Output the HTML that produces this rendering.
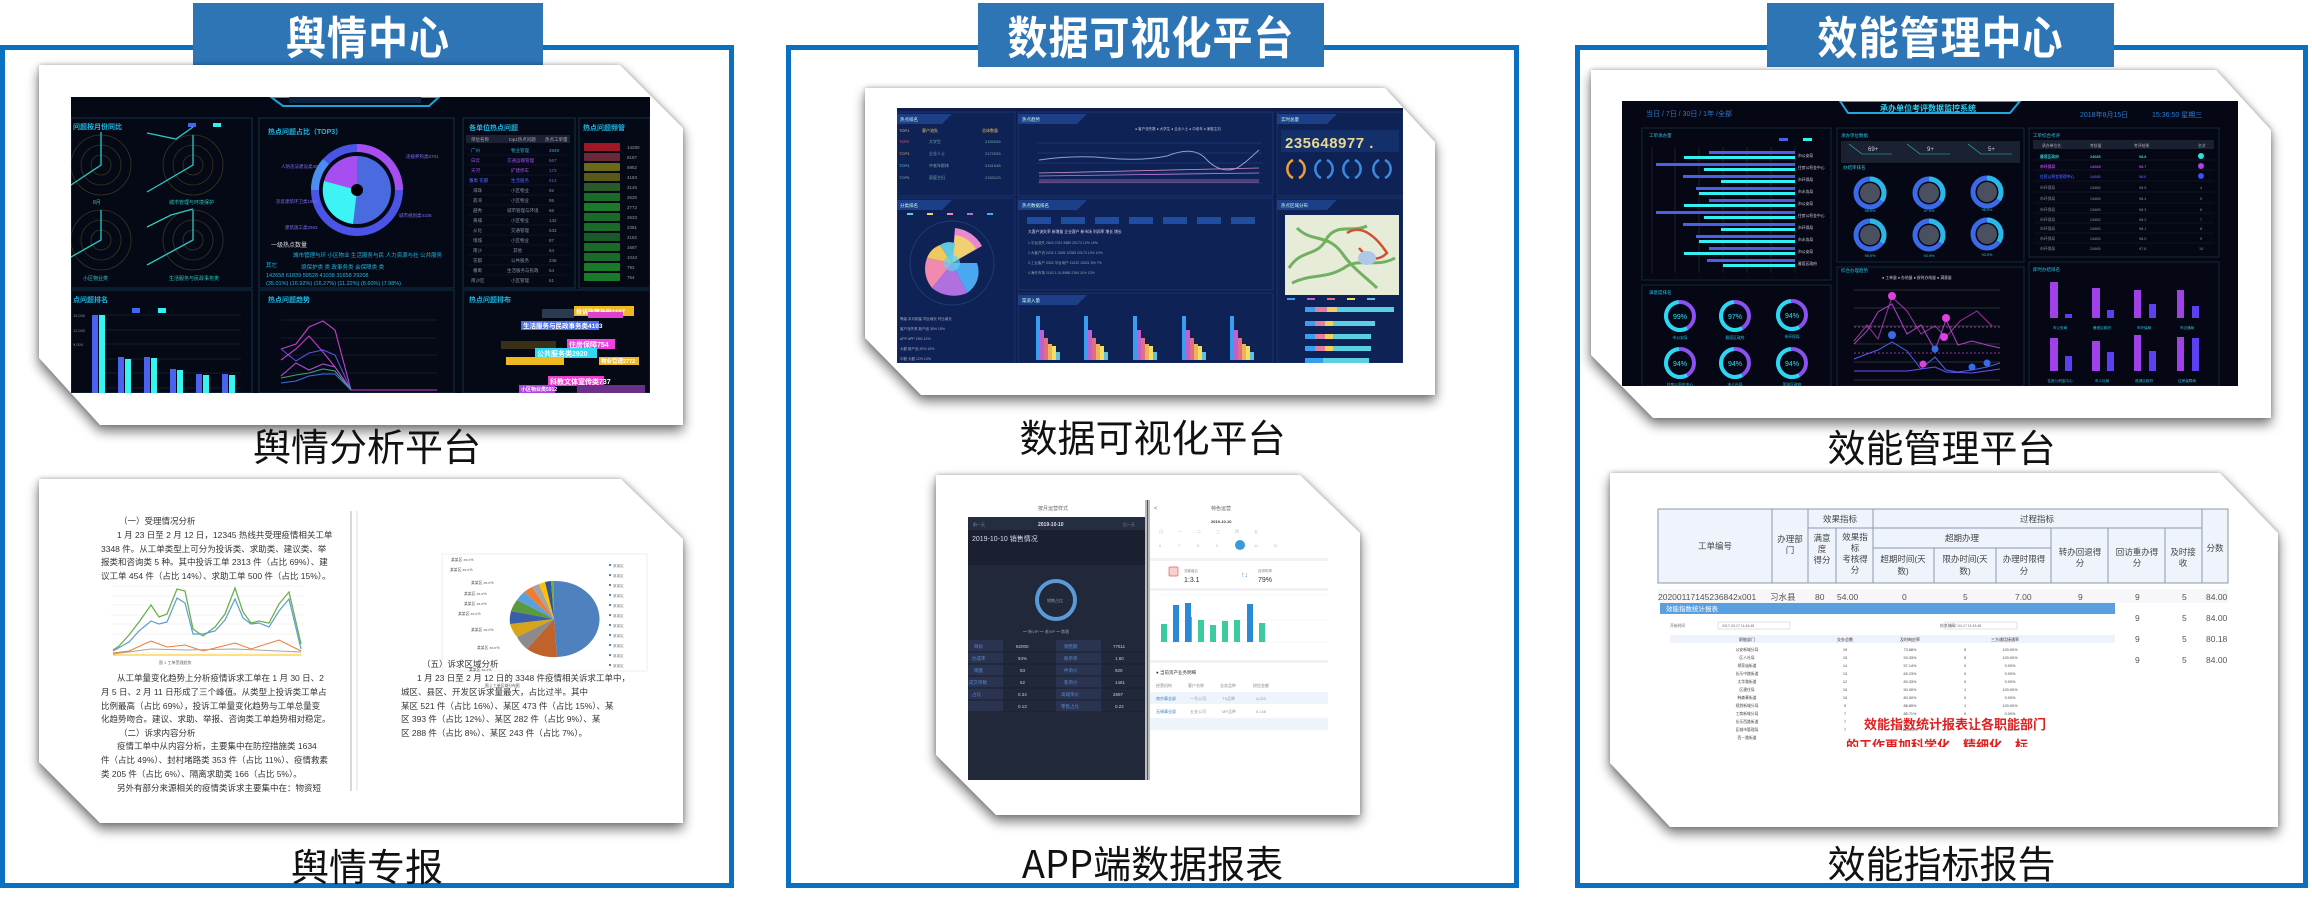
<!DOCTYPE html>
<html><head><meta charset="utf-8">
<style>
*{margin:0;padding:0;box-sizing:border-box}
body{width:2312px;height:911px;background:#fff;position:relative;overflow:hidden;font-family:"Liberation Sans","Noto Sans CJK SC",sans-serif}
.abs{position:absolute}
.panel{position:absolute;border:5px solid #0a70c2;top:45px;height:843px}
.title{position:absolute;top:3px;height:64px;background:#2e75b6;color:#fff;font-weight:bold;font-size:40px;display:flex;align-items:center;justify-content:center;letter-spacing:1px;font-family:"Noto Sans CJK SC",sans-serif}
.title span{display:inline-block;transform:scaleY(1.12)}
.cap{position:absolute;font-size:38px;color:#111;text-align:center;font-family:"Noto Sans CJK SC",sans-serif;line-height:1}
.cardw{position:absolute;filter:drop-shadow(0 6px 6px rgba(0,0,0,.45)) drop-shadow(0 0 2px rgba(0,0,0,.3))}
.card{position:absolute;inset:0;background:#fff;overflow:hidden}
svg text{font-family:"Liberation Sans","Noto Sans CJK SC",sans-serif}
</style></head><body>

<!-- PANELS -->
<div class="panel" style="left:0;width:734px"></div>
<div class="panel" style="left:786px;width:733px"></div>
<div class="panel" style="left:1575px;width:733px"></div>

<div class="title" style="left:193px;width:350px"><span>舆情中心</span></div>
<div class="title" style="left:978px;width:346px"><span>数据可视化平台</span></div>
<div class="title" style="left:1767px;width:347px"><span>效能管理中心</span></div>

<!-- ============ PANEL 1 CARD 1 ============ -->
<div class="cardw" style="left:39px;top:65px;width:644px;height:360px">
 <div class="card" style="clip-path:polygon(0 0,581px 0,644px 63px,644px 100%,61px 100%,0 293px)">
  <svg class="abs" style="left:32px;top:32px" width="579" height="296" viewBox="0 0 579 296">
   <rect width="579" height="296" fill="#050916"/>
   <path d="M200 0 L368 0 L358 9 L212 9 Z" fill="none" stroke="#1aa7d8" stroke-width="2"/>
   <rect x="218" y="0" width="132" height="6" fill="#0c2440"/>
   <!-- panel frames -->
   <g fill="none" stroke="#13314a" stroke-width="1">
    <rect x="0" y="21" width="181" height="170"/><rect x="188" y="21" width="195" height="170"/>
    <rect x="392" y="21" width="112" height="170"/><rect x="508" y="21" width="71" height="170"/>
    <rect x="0" y="193" width="181" height="103"/><rect x="188" y="193" width="195" height="103"/><rect x="392" y="193" width="187" height="103"/>
   </g>
   <text x="2" y="32" font-size="7" fill="#1fb7e0" font-weight="bold">问题按月份同比</text>
   <rect x="117" y="26" width="8" height="4" fill="#4466ee"/><rect x="142" y="26" width="8" height="4" fill="#33f0f0"/>
   <text x="197" y="37" font-size="7" fill="#1fb7e0" font-weight="bold">热点问题占比（TOP3）</text>
   <text x="398" y="33" font-size="7" fill="#1fb7e0" font-weight="bold">各单位热点问题</text>
   <text x="512" y="33" font-size="7" fill="#1fb7e0" font-weight="bold">热点问题频管</text>
   <text x="2" y="205" font-size="7" fill="#1fb7e0" font-weight="bold">点问题排名</text>
   <text x="197" y="205" font-size="7" fill="#1fb7e0" font-weight="bold">热点问题趋势</text>
   <text x="398" y="205" font-size="7" fill="#1fb7e0" font-weight="bold">热点问题排布</text>
   <!-- radars -->
   <g fill="none" stroke="#3b3520" stroke-width="0.8">
    <circle cx="30" cy="68" r="10"/><circle cx="30" cy="68" r="20"/><circle cx="30" cy="68" r="30"/>
    <circle cx="122" cy="68" r="10"/><circle cx="122" cy="68" r="20"/><circle cx="122" cy="68" r="30"/>
    <circle cx="30" cy="143" r="10"/><circle cx="30" cy="143" r="20"/><circle cx="30" cy="143" r="30"/>
    <circle cx="122" cy="143" r="10"/><circle cx="122" cy="143" r="20"/><circle cx="122" cy="143" r="30"/>
   </g>
   <g stroke="#2fc8c0" stroke-width="1.3" fill="none">
    <path d="M30 35 V68 L0 88"/><path d="M122 38 V68 L76 95 M76 36 L105 42 L122 30"/>
    <path d="M30 113 V143 L0 160"/><path d="M122 113 V143 L76 168 M76 130 L100 118 L122 112"/>
   </g>
   <g font-size="5" fill="#2fc8c0"><text x="22" y="107">8月</text><text x="98" y="107">城市管理与环境保护</text><text x="12" y="183">小区物业类</text><text x="98" y="183">生活服务与民政事务类</text></g>
   <!-- donut -->
   <circle cx="286" cy="93" r="46" fill="#4a55e8"/>
   <path d="M286 47 A46 46 0 0 1 332 93 L286 93Z" fill="#a64ef0"/>
   <path d="M286 93 L240 93 A46 46 0 0 1 252 62Z" fill="#4a8ef0"/>
   <circle cx="286" cy="93" r="38" fill="#050916"/>
   <circle cx="286" cy="93" r="34" fill="#4a6ae0"/>
   <path d="M286 93 L286 59 A34 34 0 0 0 253 84 Z" fill="#a64ef0"/>
   <path d="M286 93 L253 84 A34 34 0 0 0 282 127 Z" fill="#3ef3f3"/>
   <circle cx="286" cy="93" r="6" fill="#000"/>
   <g font-size="4.5" fill="#7a6ef0"><text x="210" y="71">人防违法建设类4052</text><text x="205" y="106">违反建筑环卫类1904</text><text x="335" y="61">违规养狗类5701</text><text x="328" y="120">城市规划类4105</text><text x="214" y="132">建筑施工类2563</text></g>
   <text x="200" y="150" font-size="6" fill="#ddd">一级热点数量</text>
   <g font-size="5.5" fill="#1fb7e0"><text x="222" y="160">城市管理与环 小区物业 生活服务与民 人力资源与社 公共服务</text>
    <text x="195" y="170">其它</text><text x="230" y="172">境保护类    类     政事务类    会保障类    类</text>
    <text x="195" y="180">142658  61839  59528  41038  31658  29208</text>
    <text x="195" y="188">(35.01%) (16.92%) (16.27%) (11.22%) (8.60%) (7.98%)</text></g>
   <!-- table -->
   <rect x="395" y="38" width="104" height="8" fill="#1c2233"/>
   <g font-size="4.5" fill="#aaa"><text x="400" y="44">单位名称</text><text x="438" y="44">top1热点问题</text><text x="474" y="44">热点工单量</text></g>
   <g font-size="4.5">
    <text x="400" y="55" fill="#3ac">广州</text><text x="440" y="55" fill="#3ac">物业管理</text><text x="478" y="55" fill="#3ac">2849</text>
    <text x="400" y="65" fill="#a44ef0">白云</text><text x="436" y="65" fill="#a44ef0">交通运输管理</text><text x="478" y="65" fill="#a44ef0">667</text>
    <text x="400" y="75" fill="#a44ef0">天河</text><text x="440" y="75" fill="#a44ef0">扩建停车</text><text x="478" y="75" fill="#a44ef0">173</text>
    <text x="398" y="85" fill="#5566ff">番禺 花都</text><text x="440" y="85" fill="#5566ff">生活服务</text><text x="478" y="85" fill="#5566ff">614</text>
   </g>
   <g fill="#8891a0" font-size="4.5">
    <text x="402" y="95">海珠</text><text x="440" y="95">小区物业</text><text x="478" y="95">92</text>
    <text x="402" y="105">荔湾</text><text x="440" y="105">小区物业</text><text x="478" y="105">95</text>
    <text x="402" y="115">越秀</text><text x="436" y="115">城市管理与环境</text><text x="478" y="115">66</text>
    <text x="402" y="125">黄埔</text><text x="440" y="125">小区物业</text><text x="478" y="125">142</text>
    <text x="402" y="135">从化</text><text x="440" y="135">交通管理</text><text x="478" y="135">533</text>
    <text x="402" y="145">增城</text><text x="440" y="145">小区物业</text><text x="478" y="145">87</text>
    <text x="402" y="155">南沙</text><text x="442" y="155">其他</text><text x="478" y="155">54</text>
    <text x="402" y="165">花都</text><text x="440" y="165">公共服务</text><text x="478" y="165">245</text>
    <text x="402" y="175">番禺</text><text x="436" y="175">生活服务与民政</text><text x="478" y="175">54</text>
    <text x="400" y="185">南沙区</text><text x="440" y="185">小区管理</text><text x="478" y="185">61</text>
   </g>
   <g stroke="#1a2030" stroke-width="0.6"><path d="M397 58H500M397 68H500M397 78H500M397 88H500M397 98H500M397 108H500M397 118H500M397 128H500M397 138H500M397 148H500M397 158H500M397 168H500M397 178H500"/></g>
   <!-- right tags -->
   <g>
    <rect x="513" y="46" width="36" height="8" rx="1" fill="#a01828"/>
    <rect x="513" y="56" width="36" height="8" rx="1" fill="#6a2838"/>
    <rect x="513" y="66" width="36" height="8" rx="1" fill="#6a6a18"/>
    <rect x="513" y="76" width="36" height="8" rx="1" fill="#5a5a18"/>
    <rect x="513" y="86" width="36" height="8" rx="1" fill="#2a5a2a"/>
    <rect x="513" y="96" width="36" height="8" rx="1" fill="#1a6a2a"/>
    <rect x="513" y="106" width="36" height="8" rx="1" fill="#1a7a2a"/>
    <rect x="513" y="116" width="36" height="8" rx="1" fill="#1a6a2a"/>
    <rect x="513" y="126" width="36" height="8" rx="1" fill="#1a6a2a"/>
    <rect x="513" y="136" width="36" height="8" rx="1" fill="#1a5a2a"/>
    <rect x="513" y="146" width="36" height="8" rx="1" fill="#1a6a2a"/>
    <rect x="513" y="156" width="36" height="8" rx="1" fill="#1a6a2a"/>
    <rect x="513" y="166" width="36" height="8" rx="1" fill="#1a7a2a"/>
    <rect x="513" y="176" width="36" height="8" rx="1" fill="#1a7a2a"/>
   </g>
   <g fill="#999" font-size="4.5"><text x="556" y="52">14280</text><text x="556" y="62">8187</text><text x="556" y="72">5952</text><text x="556" y="82">4183</text><text x="556" y="92">3145</text><text x="556" y="102">2520</text><text x="556" y="112">2772</text><text x="556" y="122">2633</text><text x="556" y="132">2381</text><text x="556" y="142">2182</text><text x="556" y="152">1687</text><text x="556" y="162">1043</text><text x="556" y="172">792</text><text x="556" y="182">754</text></g>
   <!-- bar chart -->
   <rect x="61" y="211" width="8" height="5" fill="#4466ee"/><rect x="87" y="211" width="8" height="5" fill="#33f0f0"/>
   <g stroke="#2a3040" stroke-width="0.6"><path d="M25 218H170M25 233H170M25 247H170M25 262H170M25 276H170M25 291H170"/></g>
   <g font-size="4" fill="#889"><text x="2" y="220">15,000</text><text x="2" y="235">12,000</text><text x="2" y="249">9,000</text></g>
   <g fill="#4a62ee"><rect x="21" y="218" width="6" height="78"/><rect x="47" y="260" width="6" height="36"/><rect x="73" y="260" width="6" height="36"/><rect x="99" y="272" width="6" height="24"/><rect x="125" y="277" width="6" height="19"/><rect x="151" y="277" width="6" height="19"/></g>
   <g fill="#35f5f0"><rect x="28" y="218" width="6" height="78"/><rect x="54" y="262" width="6" height="34"/><rect x="80" y="261" width="6" height="35"/><rect x="106" y="273" width="6" height="23"/><rect x="132" y="278" width="6" height="18"/><rect x="158" y="278" width="6" height="18"/></g>
   <!-- line chart -->
   <g stroke="#2a3040" stroke-width="0.6"><path d="M210 223H366M210 241H366M210 258H366M210 276H366M210 293H366"/></g>
   <g fill="none" stroke-width="1.1">
    <path d="M210 252 L225 247 L238 230 L252 224 L264 233 L280 293 L366 293" stroke="#c040c8"/>
    <path d="M210 252 L225 264 L238 256 L252 253 L264 258 L280 293" stroke="#5a50e0"/>
    <path d="M210 279 L225 266 L238 273 L252 267 L264 270 L280 293" stroke="#b050d0"/>
    <path d="M210 286 L225 284 L238 279 L252 277 L264 277 L280 293" stroke="#3a70e0"/>
    <path d="M210 281 L225 278 L238 276 L252 272 L264 274 L280 293" stroke="#40a080"/>
   </g>
   <path d="M210 223 L225 212 L238 199 L252 215 L264 230" fill="none" stroke="#c040c8" stroke-width="1.1" transform="translate(0,40)"/>
   <!-- word cloud -->
   <g font-size="7" font-weight="bold" fill="#fff">
    <rect x="471" y="212" width="32" height="9" fill="#2a3a50"/>
    <rect x="503" y="209" width="60" height="10" fill="#f0b820"/><text x="505" y="217" font-size="6">投诉政策补贴1107</text>
    <rect x="517" y="215" width="35" height="6" fill="#e040d0"/>
    <rect x="450" y="224" width="78" height="9" fill="#4a6ef0"/><text x="452" y="231" font-size="6.5">生活服务与民政事务类4103</text>
    <rect x="430" y="244" width="55" height="8" fill="#3a3018"/>
    <rect x="496" y="242" width="48" height="10" fill="#f040e0"/><text x="498" y="250">住房保障754</text>
    <rect x="464" y="251" width="62" height="10" fill="#30d8f0"/><text x="466" y="259">公共服务类2920</text>
    <rect x="435" y="260" width="58" height="8" fill="#f0b820"/>
    <rect x="528" y="260" width="40" height="8" fill="#f0b820"/><text x="530" y="266" font-size="5.5">物业管理2772</text>
    <rect x="477" y="279" width="56" height="10" fill="#f040d0"/><text x="479" y="287">科教文体宣传类737</text>
    <rect x="448" y="288" width="36" height="8" fill="#b040e0"/><text x="450" y="294" font-size="5">小区物业类5912</text>
    <rect x="506" y="288" width="68" height="8" fill="#6a3088"/>
   </g>
  </svg>
 </div>
</div>
<div class="cap" style="left:0;width:734px;top:426px">舆情分析平台</div>

<!-- ============ PANEL 1 CARD 2 ============ -->
<div class="cardw" style="left:39px;top:479px;width:644px;height:344px">
 <div class="card" style="clip-path:polygon(0 0,582px 0,644px 60px,644px 100%,61px 100%,0 283px)">
  <svg class="abs" style="left:0;top:0" width="644" height="344" viewBox="0 0 644 344">
   <line x1="312" y1="32" x2="312" y2="312" stroke="#ccc" stroke-width="1.5"/>
   <line x1="318" y1="32" x2="318" y2="312" stroke="#ddd" stroke-width="1"/>
   <g font-size="8.5" fill="#333">
    <text x="80" y="45">（一）受理情况分析</text>
    <text x="78" y="59">1 月 23 日至 2 月 12 日，12345 热线共受理疫情相关工单</text>
    <text x="62" y="73">3348 件。从工单类型上可分为投诉类、求助类、建议类、举</text>
    <text x="62" y="86">报类和咨询类 5 种。其中投诉工单 2313 件（占比 69%）、建</text>
    <text x="62" y="100">议工单 454 件（占比 14%）、求助工单 500 件（占比 15%）。</text>
    <text x="78" y="202">从工单量变化趋势上分析疫情诉求工单在 1 月 30 日、2</text>
    <text x="62" y="216">月 5 日、2 月 11 日形成了三个峰值。从类型上投诉类工单占</text>
    <text x="62" y="230">比例最高（占比 69%），投诉工单量变化趋势与工单总量变</text>
    <text x="62" y="243">化趋势吻合。建议、求助、举报、咨询类工单趋势相对稳定。</text>
    <text x="80" y="257">（二）诉求内容分析</text>
    <text x="78" y="270">疫情工单中从内容分析，主要集中在防控措施类 1634</text>
    <text x="62" y="284">件（占比 49%）、封村堵路类 353 件（占比 11%）、疫情救素</text>
    <text x="62" y="298">类 205 件（占比 6%）、隔离求助类 166（占比 5%）。</text>
    <text x="78" y="312">另外有部分来源相关的疫情类诉求主要集中在：物资短</text>
    <text x="383" y="188">（五）诉求区域分析</text>
    <text x="378" y="202">1 月 23 日至 2 月 12 日的 3348 件疫情相关诉求工单中，</text>
    <text x="362" y="216">城区、县区、开发区诉求量最大，占比过半。其中</text>
    <text x="362" y="230">某区 521 件（占比 16%）、某区 473 件（占比 15%）、某</text>
    <text x="362" y="243">区 393 件（占比 12%）、某区 282 件（占比 9%）、某</text>
    <text x="362" y="257">区 288 件（占比 8%）、某区 243 件（占比 7%）。</text>
   </g>
   <!-- line chart -->
   <g stroke="#e8e8e8" stroke-width="0.6"><path d="M72 107H265M72 117H265M72 126H265M72 136H265M72 145H265M72 155H265M72 164H265M72 174H265"/></g>
   <path d="M74 171 L80 167 L90 156 L100 143 L112 126 L120 138 L128 135 L138 110 L146 112 L154 150 L164 157 L176 148 L186 135 L196 109 L204 133 L212 144 L220 142 L230 144 L240 125 L250 113 L262 165" fill="none" stroke="#6ab04c" stroke-width="1.3"/>
   <path d="M74 172 L90 163 L100 152 L112 142 L120 145 L128 143 L138 119 L146 124 L154 155 L164 155 L176 152 L186 141 L196 120 L204 139 L212 145 L220 144 L230 148 L240 132 L250 120 L262 170" fill="none" stroke="#5b9bd5" stroke-width="1.2"/>
   <path d="M74 174 L90 172 L112 162 L128 168 L146 166 L164 172 L196 164 L212 170 L240 161 L262 172" fill="none" stroke="#ed7d31" stroke-width="1"/>
   <path d="M74 175 L112 170 L146 171 L196 170 L262 173" fill="none" stroke="#a5a5a5" stroke-width="1"/>
   <path d="M74 176 L262 176" fill="none" stroke="#ffc000" stroke-width="1"/>
   <g font-size="4" fill="#666"><text x="120" y="185">图 1 工单受理趋势</text></g>
   <!-- pie -->
   <rect x="403" y="75" width="205" height="117" fill="none" stroke="#eee"/>
   <g transform="translate(515,140)">
    <path d="M0 0 L0 -38 A44 38 0 0 1 3 38 Z" fill="#4e81bd"/>
    <path d="M0 0 L3 38 A44 38 0 0 1 -27 30 Z" fill="#c0622c"/>
    <path d="M0 0 L-27 30 A44 38 0 0 1 -37 18 Z" fill="#8b8b8b"/>
    <path d="M0 0 L-37 18 A44 38 0 0 1 -44 5 Z" fill="#d8a41a"/>
    <path d="M0 0 L-44 5 A44 38 0 0 1 -43 -8 Z" fill="#3a5fa8"/>
    <path d="M0 0 L-43 -8 A44 38 0 0 1 -37 -19 Z" fill="#5a9a3c"/>
    <path d="M0 0 L-37 -19 A44 38 0 0 1 -30 -27 Z" fill="#5aa0e0"/>
    <path d="M0 0 L-30 -27 A44 38 0 0 1 -22 -32 Z" fill="#ed7d31"/>
    <path d="M0 0 L-22 -32 A44 38 0 0 1 -15 -35 Z" fill="#a5a5a5"/>
    <path d="M0 0 L-15 -35 A44 38 0 0 1 -9 -37 Z" fill="#ffc000"/>
    <path d="M0 0 L-9 -37 A44 38 0 0 1 -3 -38 Z" fill="#2f5597"/>
    <path d="M0 0 L-3 -38 A44 38 0 0 1 0 -38 Z" fill="#70ad47"/>
   </g>
   <g fill="#555" font-size="3.8">
    <text x="412" y="82">某某区 xx.x%</text><text x="411" y="92">某某区 xx.x%</text><text x="432" y="105">某某区 xx.x%</text><text x="425" y="116">某某区 xx.x%</text><text x="425" y="126">某某区 xx.x%</text><text x="419" y="136">某某区 xx.x%</text><text x="432" y="152">某某区 xx.x%</text><text x="438" y="170">某某区 xx.x%</text><text x="430" y="192">某某区 xx.x%</text><text x="446" y="208">图 2 工单区域分布图</text>
   </g>
   <g font-size="3.6" fill="#777">
    <g fill="#4e81bd"><rect x="570" y="85" width="2" height="2"/><rect x="570" y="95" width="2" height="2"/><rect x="570" y="105" width="2" height="2"/><rect x="570" y="115" width="2" height="2"/><rect x="570" y="125" width="2" height="2"/><rect x="570" y="135" width="2" height="2"/><rect x="570" y="145" width="2" height="2"/><rect x="570" y="155" width="2" height="2"/><rect x="570" y="165" width="2" height="2"/><rect x="570" y="175" width="2" height="2"/><rect x="570" y="185" width="2" height="2"/></g>
    <text x="574" y="88">某某区</text><text x="574" y="98">某某区</text><text x="574" y="108">某某区</text><text x="574" y="118">某某区</text><text x="574" y="128">某某区</text><text x="574" y="138">某某区</text><text x="574" y="148">某某区</text><text x="574" y="158">某某区</text><text x="574" y="168">某某区</text><text x="574" y="178">某某区</text><text x="574" y="188">某某区</text>
   </g>
  </svg>
 </div>
</div>
<div class="cap" style="left:0;width:734px;top:846px">舆情专报</div>

<!-- ============ PANEL 2 CARD 1 ============ -->
<div class="cardw" style="left:865px;top:88px;width:570px;height:307px">
 <div class="card" style="clip-path:polygon(0 0,520px 0,570px 54px,570px 100%,56px 100%,0 250px)">
  <svg class="abs" style="left:32px;top:20px" width="506" height="255" viewBox="0 0 506 255">
   <rect width="506" height="255" fill="#0e1d4a"/>
   <g fill="#0f2255" stroke="#1f3a78" stroke-width="0.8">
    <rect x="0" y="4" width="118" height="84"/><rect x="121" y="4" width="255" height="84"/><rect x="380" y="4" width="126" height="84"/>
    <rect x="0" y="90" width="118" height="165"/><rect x="121" y="90" width="255" height="92"/><rect x="380" y="90" width="126" height="165"/>
    <rect x="121" y="185" width="255" height="70"/>
   </g>
   <g fill="#1c3f88"><path d="M0 6H55L45 16H0Z"/><path d="M121 6H190L180 16H121Z"/><path d="M380 6H440L430 16H380Z"/><path d="M0 92H55L45 102H0Z"/><path d="M121 92H190L180 102H121Z"/><path d="M380 92H440L430 102H380Z"/><path d="M121 187H190L180 197H121Z"/></g>
   <g fill="#cfe" font-size="4.5"><text x="3" y="13">热点排名</text><text x="125" y="13">热点趋势</text><text x="384" y="13">实时总量</text><text x="3" y="99">分类排名</text><text x="125" y="99">热点数据排名</text><text x="384" y="99">热点区域分布</text><text x="125" y="194">渠道入量</text></g>
   <g font-size="4" fill="#e8c060"><text x="2" y="24">TOP1</text><text x="25" y="24">客户流失</text><text x="85" y="24">总体数量</text></g>
   <g font-size="4" fill="#7aa"><text x="2" y="35" fill="#e06080">TOP2</text><text x="32" y="35">大学生</text><text x="88" y="35">2152049</text><text x="2" y="47" fill="#e0a060">TOP3</text><text x="32" y="47">企业人士</text><text x="88" y="47">2172035</text><text x="2" y="59" fill="#60c0e0">TOP4</text><text x="32" y="59">中老年群体</text><text x="88" y="59">2161548</text><text x="2" y="71">TOP5</text><text x="32" y="71">家庭主妇</text><text x="88" y="71">2153123</text></g>
   <!-- line chart -->
   <g fill="#ccd" font-size="3.5"><text x="238" y="22">● 客户流失数  ● 大学生  ● 企业人士  ● 中老年  ● 家庭主妇</text></g>
   <g stroke="#2a4488" stroke-width="0.5"><path d="M140 35H365M140 45H365M140 55H365M140 65H365M140 75H365"/></g>
   <path d="M142 52 C170 48,190 48,210 50 C230 52,250 52,270 48 C285 42,300 40,310 52 C320 62,330 64,340 60 C350 54,355 48,362 42" fill="none" stroke="#8aa0d8" stroke-width="1"/>
   <path d="M142 65 L362 60" stroke="#d090c0" stroke-width="0.8"/><path d="M142 68 L362 65" stroke="#c080e0" stroke-width="0.8"/><path d="M142 72 L362 72" stroke="#a070e0" stroke-width="0.8"/><path d="M142 74 L362 74" stroke="#e07090" stroke-width="0.8"/>
   <!-- counter -->
   <rect x="384" y="22" width="118" height="22" fill="#13306a"/>
   <text x="388" y="40" font-size="15" font-weight="bold" fill="#e8d890" letter-spacing="0.5">235648977 .</text>
   <g fill="none" stroke-width="2.5">
    <path d="M396 52 A10 10 0 0 0 396 70" stroke="#f0a030"/><path d="M402 52 A10 10 0 0 1 402 70" stroke="#f0a030"/>
    <path d="M424 52 A10 10 0 0 0 424 70" stroke="#3a8ae0"/><path d="M430 52 A10 10 0 0 1 430 70" stroke="#3a8ae0"/>
    <path d="M452 52 A10 10 0 0 0 452 70" stroke="#3a8ae0"/><path d="M458 52 A10 10 0 0 1 458 70" stroke="#3a8ae0"/>
    <path d="M482 52 A10 10 0 0 0 482 70" stroke="#3a8ae0"/><path d="M488 52 A10 10 0 0 1 488 70" stroke="#3a8ae0"/>
   </g>
   <!-- rose -->
   <circle cx="55" cy="155" r="42" fill="none" stroke="#1f3a78"/>
   <g transform="translate(55,155)">
    <path d="M0 0 L3 -35 A35 35 0 0 1 30 -17Z" fill="#e88ad0"/><path d="M0 0 L3 -28 A28 28 0 0 1 24 -14Z" fill="#f0d070"/>
    <path d="M0 0 L25 0 A25 25 0 0 1 15 30Z" fill="#4aa8f0"/><path d="M0 0 L15 30 A34 34 0 0 1 -20 25Z" fill="#b070e0"/>
    <path d="M0 0 L-20 25 A30 30 0 0 1 -25 -5Z" fill="#f08ab0"/><path d="M0 0 L-25 -5 A22 22 0 0 1 -12 -18Z" fill="#f0c860"/>
    <path d="M0 0 L-12 -18 A18 18 0 0 1 3 -20Z" fill="#60c8e0"/><circle r="8" fill="#60d0f0" opacity=".7"/>
   </g>
   <g font-size="3.5"><rect x="10" y="105" width="6" height="2" fill="#60c8e0"/><rect x="30" y="105" width="6" height="2" fill="#f0d070"/><rect x="50" y="105" width="6" height="2" fill="#f08ab0"/><rect x="70" y="105" width="6" height="2" fill="#b070e0"/><rect x="90" y="105" width="6" height="2" fill="#4aa8f0"/></g>
   <g font-size="3.5" fill="#aab"><text x="3" y="212">等级  本月销量  同比增长  环比增长</text><text x="3" y="222">客户流失率  新产品  30%  15%</text><text x="3" y="232">APP  APP  15%  12%</text><text x="3" y="242">大额  新产品  20%  15%</text><text x="3" y="252">中额  大额  12%  10%</text></g>
   <!-- table buttons -->
   <g fill="#1f4ea0"><rect x="130" y="109" width="24" height="7"/><rect x="164" y="109" width="24" height="7"/><rect x="198" y="109" width="24" height="7"/><rect x="232" y="109" width="24" height="7"/><rect x="266" y="109" width="24" height="7"/><rect x="300" y="109" width="24" height="7"/><rect x="334" y="109" width="24" height="7"/></g>
   <g font-size="3.8" fill="#dde"><text x="131" y="125">大客户流失率  新增量  企业客户  新市场  利润率  增长  增长</text></g>
   <g font-size="3.5" fill="#8aa"><text x="131" y="136">1.平台流失    2843   7021   9589   20173   12%   15%</text><text x="131" y="146">2.大客户流   2202   1.3265   12285   20173   13%   10%</text><text x="131" y="156">3.工业客户   3302   平台用户  11220   13021   5%   7%</text><text x="131" y="166">4.海外市场   2152   1.01   8988   2154   11%   12%</text></g>
   <!-- bar groups -->
   <g>
    <g transform="translate(139,208)"><rect x="0" y="0" width="4" height="44" fill="#3a9ef0"/><rect x="4" y="14" width="4" height="30" fill="#c060d0"/><rect x="8" y="22" width="4" height="22" fill="#e07080"/><rect x="12" y="28" width="4" height="16" fill="#f0b060"/><rect x="16" y="30" width="4" height="14" fill="#f0e060"/><rect x="20" y="36" width="4" height="8" fill="#60c0e0"/></g>
    <g transform="translate(187,208)"><rect x="0" y="0" width="4" height="44" fill="#3a9ef0"/><rect x="4" y="14" width="4" height="30" fill="#c060d0"/><rect x="8" y="22" width="4" height="22" fill="#e07080"/><rect x="12" y="28" width="4" height="16" fill="#f0b060"/><rect x="16" y="30" width="4" height="14" fill="#f0e060"/><rect x="20" y="36" width="4" height="8" fill="#60c0e0"/></g>
    <g transform="translate(236,208)"><rect x="0" y="0" width="4" height="44" fill="#3a9ef0"/><rect x="4" y="14" width="4" height="30" fill="#c060d0"/><rect x="8" y="22" width="4" height="22" fill="#e07080"/><rect x="12" y="28" width="4" height="16" fill="#f0b060"/><rect x="16" y="30" width="4" height="14" fill="#f0e060"/><rect x="20" y="36" width="4" height="8" fill="#60c0e0"/></g>
    <g transform="translate(285,208)"><rect x="0" y="0" width="4" height="44" fill="#3a9ef0"/><rect x="4" y="14" width="4" height="30" fill="#c060d0"/><rect x="8" y="22" width="4" height="22" fill="#e07080"/><rect x="12" y="28" width="4" height="16" fill="#f0b060"/><rect x="16" y="30" width="4" height="14" fill="#f0e060"/><rect x="20" y="36" width="4" height="8" fill="#60c0e0"/></g>
    <g transform="translate(333,208)"><rect x="0" y="0" width="4" height="44" fill="#3a9ef0"/><rect x="4" y="14" width="4" height="30" fill="#c060d0"/><rect x="8" y="22" width="4" height="22" fill="#e07080"/><rect x="12" y="28" width="4" height="16" fill="#f0b060"/><rect x="16" y="30" width="4" height="14" fill="#f0e060"/><rect x="20" y="36" width="4" height="8" fill="#60c0e0"/></g>
   </g>
   <!-- map -->
   <rect x="388" y="107" width="114" height="80" fill="#e6ecd8"/>
   <path d="M392 160 C405 140,420 150,430 130 C440 115,455 125,470 118 M395 175 C415 165,430 172,450 158 C465 150,480 160,498 150 M400 120 C415 135,430 125,445 145 C455 160,470 170,480 180" fill="none" stroke="#70b060" stroke-width="3"/>
   <path d="M450 125 C465 115,480 130,490 145 C480 155,470 150,462 140" fill="none" stroke="#d05030" stroke-width="2.5"/>
   <ellipse cx="470" cy="150" rx="9" ry="7" fill="#b0c8e8"/>
   <g font-size="3"><rect x="390" y="190" width="8" height="2" fill="#3a9ef0"/><rect x="410" y="190" width="8" height="2" fill="#c060d0"/><rect x="430" y="190" width="8" height="2" fill="#e07080"/><rect x="450" y="190" width="8" height="2" fill="#f0e060"/><rect x="470" y="190" width="8" height="2" fill="#60c0e0"/></g>
   <g>
    <rect x="408" y="199" width="89" height="5" fill="#5ad0e0"/><rect x="408" y="199" width="30" height="5" fill="#3a9ef0"/><rect x="418" y="199" width="22" height="5" fill="#e080a0"/><rect x="430" y="199" width="10" height="5" fill="#f0d060"/>
    <rect x="408" y="213" width="70" height="5" fill="#5ad0e0"/><rect x="408" y="213" width="18" height="5" fill="#3a9ef0"/><rect x="418" y="213" width="16" height="5" fill="#e080a0"/><rect x="428" y="213" width="8" height="5" fill="#f0d060"/>
    <rect x="408" y="226" width="66" height="5" fill="#5ad0e0"/><rect x="408" y="226" width="18" height="5" fill="#3a9ef0"/><rect x="418" y="226" width="16" height="5" fill="#e080a0"/><rect x="428" y="226" width="8" height="5" fill="#f0d060"/>
    <rect x="408" y="238" width="66" height="5" fill="#5ad0e0"/><rect x="408" y="238" width="18" height="5" fill="#3a9ef0"/><rect x="418" y="238" width="16" height="5" fill="#e080a0"/><rect x="428" y="238" width="8" height="5" fill="#f0d060"/>
    <rect x="408" y="250" width="64" height="5" fill="#5ad0e0"/><rect x="408" y="250" width="18" height="5" fill="#3a9ef0"/>
   </g>
  </svg>
 </div>
</div>
<div class="cap" style="left:786px;width:733px;top:417px">数据可视化平台</div>

<!-- ============ PANEL 2 CARD 2 (APP) ============ -->
<div class="cardw" style="left:936px;top:475px;width:424px;height:340px">
 <div class="card" style="clip-path:polygon(0 0,364px 0,424px 58px,424px 100%,60px 100%,0 280px)">
  <svg class="abs" style="left:32px;top:25px" width="360" height="280" viewBox="0 0 360 280">
   <rect x="0" y="0" width="177" height="17" fill="#fff"/>
   <text x="70" y="10" font-size="5" fill="#666">按月运营样式</text>
   <rect x="0" y="17" width="177" height="263" fill="#20283a"/>
   <rect x="0" y="17" width="177" height="13" fill="#252d42"/>
   <text x="70" y="26" font-size="5" fill="#dde" font-weight="bold">2019-10-10</text>
   <text x="5" y="26" font-size="4" fill="#889">前一天</text><text x="155" y="26" font-size="4" fill="#889">后一天</text>
   <rect x="0" y="30" width="177" height="35" fill="#1a2030"/>
   <text x="4" y="41" font-size="7" fill="#dde">2019-10-10 销售情况</text>
   <circle cx="88" cy="100" r="19" fill="none" stroke="#5a9ad8" stroke-width="4"/>
   <text x="79" y="102" font-size="4" fill="#99a">销售占比</text>
   <text x="55" y="133" font-size="4" fill="#99a">━ 新VIP  ━ 老VIP  ━ 散客</text>
   <g fill="#2a3350"><rect x="0" y="140" width="35" height="140"/><rect x="88" y="140" width="45" height="140"/></g>
   <g stroke="#1a1f2e" stroke-width="1"><path d="M0 152H177M0 164H177M0 176H177M0 188H177M0 200H177M0 212H177"/></g>
   <g font-size="4.5" fill="#5a8ad0"><text x="6" y="148">目标</text><text x="4" y="160">达成率</text><text x="6" y="172">销量</text><text x="1" y="184">成交单数</text><text x="4" y="196">占比</text><text x="96" y="148">销售额</text><text x="96" y="160">联单率</text><text x="96" y="172">件单价</text><text x="96" y="184">客单价</text><text x="93" y="196">高端单价</text><text x="93" y="208">零售占比</text></g>
   <g font-size="4.5" fill="#ccd"><text x="48" y="148">82000</text><text x="50" y="160">94%</text><text x="52" y="172">83</text><text x="52" y="184">52</text><text x="50" y="196">0.34</text><text x="50" y="208">0.13</text><text x="145" y="148">77611</text><text x="147" y="160">1.60</text><text x="147" y="172">920</text><text x="147" y="184">1481</text><text x="145" y="196">2697</text><text x="147" y="208">0.22</text></g>
   <rect x="0" y="212" width="177" height="68" fill="#20283a"/>
   <rect x="177" y="0" width="5" height="280" fill="#bbb"/><rect x="179" y="0" width="1" height="280" fill="#555"/>
   <!-- right white -->
   <rect x="182" y="0" width="178" height="280" fill="#fff"/>
   <text x="186" y="10" font-size="6" fill="#777">&lt;</text>
   <text x="243" y="10" font-size="5" fill="#666">特色运营</text>
   <text x="243" y="23" font-size="4" fill="#333" font-weight="bold">2019-10-10</text>
   <g font-size="4" fill="#bbb"><text x="191" y="33">日</text><text x="210" y="33">一</text><text x="229" y="33">二</text><text x="248" y="33">三</text><text x="267" y="33">四</text><text x="286" y="33">五</text><text x="191" y="47">6</text><text x="210" y="47">7</text><text x="229" y="47">8</text><text x="248" y="47">9</text><text x="286" y="47">11</text><text x="305" y="47">12</text></g>
   <circle cx="272" cy="45" r="5" fill="#3a9ad8"/>
   <rect x="182" y="58" width="178" height="3" fill="#f2f2f4"/>
   <rect x="201" y="67" width="9" height="9" rx="1" fill="#f8d0d0" stroke="#e06060" stroke-width="0.7"/>
   <text x="216" y="72" font-size="3.5" fill="#888">流客增比</text><text x="216" y="82" font-size="7" fill="#333">1:3.1</text>
   <text x="273" y="77" font-size="7" fill="#3a9ad8">↑↓</text>
   <text x="290" y="72" font-size="3.5" fill="#888">连带购率</text><text x="290" y="82" font-size="7" fill="#333">79%</text>
   <rect x="182" y="88" width="178" height="3" fill="#f2f2f4"/>
   <g stroke="#eee" stroke-width="0.5"><path d="M190 95H360M190 120H360M190 142H360"/></g>
   <g fill="#3ccaa0"><rect x="193" y="124" width="6" height="18"/><rect x="218" y="117" width="6" height="25"/><rect x="230" y="120" width="6" height="22"/><rect x="242" y="125" width="6" height="17"/><rect x="254" y="121" width="6" height="21"/><rect x="266" y="120" width="6" height="22"/><rect x="291" y="123" width="6" height="19"/></g>
   <g fill="#2a8ad8"><rect x="205" y="105" width="6" height="37"/><rect x="218" y="102" width="0" height="0"/><rect x="279" y="104" width="6" height="38"/></g>
   <rect x="217" y="103" width="6" height="39" fill="#2a8ad8"/>
   <rect x="182" y="160" width="178" height="3" fill="#f2f2f4"/>
   <text x="188" y="174" font-size="4.5" fill="#333">● 当前资产业务明细</text>
   <g font-size="4" fill="#888"><text x="188" y="187">经营机构</text><text x="220" y="187">客户名称</text><text x="252" y="187">业务品种</text><text x="285" y="187">授信金额</text></g>
   <rect x="182" y="192" width="178" height="12" fill="#eef4fb"/>
   <g font-size="4" fill="#3a7ad0"><text x="188" y="200">南京事业部</text><text x="188" y="213">无锡事业部</text></g>
   <g font-size="4" fill="#999"><text x="222" y="200">一号公司</text><text x="254" y="200">TS品种</text><text x="288" y="200">4,020</text><text x="222" y="213">五金公司</text><text x="254" y="213">MP品种</text><text x="288" y="213">5,148</text></g>
   <rect x="182" y="218" width="178" height="12" fill="#eef4fb"/>
  </svg>
 </div>
</div>
<div class="cap" style="left:786px;width:733px;top:843px">APP端数据报表</div>

<!-- ============ PANEL 3 CARD 1 ============ -->
<div class="cardw" style="left:1591px;top:70px;width:680px;height:348px">
 <div class="card" style="clip-path:polygon(0 0,625px 0,680px 60px,680px 100%,62px 100%,0 285px)">
  <svg class="abs" style="left:31px;top:31px" width="616" height="285" viewBox="0 0 616 285">
   <rect width="616" height="285" fill="#050814"/>
   <path d="M218 0 L398 0 L388 12 L226 12 Z" fill="none" stroke="#1fa8e0" stroke-width="2"/>
   <text x="258" y="10" font-size="8" fill="#2ad0f0" font-weight="bold">承办单位考评数据监控系统</text>
   <text x="24" y="15" font-size="7" fill="#2a7ad0">当日 / 7日 / 30日 / 1年 /全部</text>
   <text x="458" y="16" font-size="7" fill="#2a7ad0">2018年8月15日</text><text x="530" y="16" font-size="7" fill="#2a7ad0">15:36:50  星期三</text>
   <g fill="none" stroke="#173040" stroke-width="0.8"><rect x="20" y="27" width="189" height="152"/><rect x="20" y="184" width="189" height="101"/><rect x="215" y="27" width="187" height="134"/><rect x="215" y="166" width="187" height="119"/><rect x="407" y="27" width="190" height="129"/><rect x="407" y="161" width="190" height="124"/></g>
   <g font-size="4.5" fill="#2ac0e0"><text x="27" y="36">工单承办量</text><text x="27" y="193">满意度排名</text><text x="219" y="36">承办单位数据</text><text x="221" y="68">办结率排名</text><text x="219" y="171">综合办理趋势</text><text x="411" y="36">工单综合考评</text><text x="411" y="170">即时办结排名</text></g>
   <!-- horizontal bars -->
   <g stroke="#333" stroke-width="0.6"><path d="M30 46V172M53 46V172M77 46V172M101 46V172M125 46V172M149 46V172M173 46V172"/></g>
   <g fill="#4a60e8"><rect x="87" y="50" width="86" height="3"/><rect x="34" y="62" width="139" height="3"/><rect x="61" y="74" width="112" height="3"/><rect x="74" y="86" width="99" height="3"/><rect x="87" y="98" width="86" height="3"/><rect x="34" y="110" width="139" height="3"/><rect x="61" y="122" width="112" height="3"/><rect x="74" y="134" width="99" height="3"/><rect x="87" y="146" width="86" height="3"/><rect x="85" y="158" width="88" height="3"/></g>
   <g fill="#35f0f0"><rect x="62" y="55" width="111" height="3"/><rect x="82" y="67" width="91" height="3"/><rect x="99" y="79" width="74" height="3"/><rect x="77" y="91" width="96" height="3"/><rect x="62" y="103" width="111" height="3"/><rect x="82" y="115" width="91" height="3"/><rect x="99" y="127" width="74" height="3"/><rect x="77" y="139" width="96" height="3"/><rect x="62" y="151" width="111" height="3"/><rect x="101" y="163" width="72" height="3"/></g>
   <g font-size="3.8" fill="#ccd"><text x="176" y="56">市公安局</text><text x="176" y="68">住房公积金中心</text><text x="176" y="80">市环保局</text><text x="176" y="92">市水务局</text><text x="176" y="104">市公安局</text><text x="176" y="116">住房公积金中心</text><text x="176" y="128">市环保局</text><text x="176" y="140">市水务局</text><text x="176" y="152">市公安局</text><text x="176" y="164">雁塔区政府</text></g>
   <rect x="157" y="37" width="9" height="3" fill="#4a60e8"/><rect x="181" y="37" width="9" height="3" fill="#35f0f0"/>
   <!-- satisfaction rings -->
   <g fill="none" stroke-width="4">
    <circle cx="58" cy="215" r="14" stroke="#8a50f0"/><circle cx="113" cy="215" r="14" stroke="#8a50f0"/><circle cx="170" cy="214" r="14" stroke="#8a50f0"/>
    <circle cx="58" cy="262" r="14" stroke="#8a50f0"/><circle cx="113" cy="262" r="14" stroke="#8a50f0"/><circle cx="170" cy="262" r="14" stroke="#8a50f0"/>
   </g>
   <g fill="none" stroke-width="4" stroke="#2ad8f0" stroke-dasharray="50 100">
    <circle cx="58" cy="215" r="14" transform="rotate(60 58 215)"/><circle cx="113" cy="215" r="14" transform="rotate(60 113 215)"/><circle cx="170" cy="214" r="14" transform="rotate(60 170 214)"/>
    <circle cx="58" cy="262" r="14" transform="rotate(60 58 262)"/><circle cx="113" cy="262" r="14" transform="rotate(60 113 262)"/><circle cx="170" cy="262" r="14" transform="rotate(60 170 262)"/>
   </g>
   <g font-size="7" fill="#2ae0f0" text-anchor="middle"><text x="58" y="218">99%</text><text x="113" y="218">97%</text><text x="170" y="217">94%</text><text x="58" y="265">94%</text><text x="113" y="265">94%</text><text x="170" y="265">94%</text></g>
   <g font-size="3.8" fill="#2ac0e0" text-anchor="middle"><text x="58" y="238">市公安局</text><text x="113" y="238">雁塔区政府</text><text x="170" y="237">市环保局</text><text x="58" y="285">住房公积金中心</text><text x="113" y="285">市人社局</text><text x="170" y="285">莲湖区政府</text></g>
   <!-- center top -->
   <rect x="219" y="40" width="179" height="22" fill="#1a2130"/>
   <g fill="none" stroke="#2ac0d0" stroke-width="0.6"><path d="M227 43 L240 53 H270 M285 43 L298 53 H328 M346 43 L359 53 H390"/></g>
   <g font-size="6" fill="#ccd"><text x="246" y="50">69+</text><text x="305" y="50">9+</text><text x="366" y="50">5+</text></g>
   <g fill="none" stroke-width="5">
    <circle cx="248" cy="92" r="14" stroke="#3a6ae8"/><circle cx="307" cy="92" r="14" stroke="#3a6ae8"/><circle cx="365" cy="91" r="14" stroke="#3a6ae8"/>
    <circle cx="248" cy="134" r="14" stroke="#3a6ae8"/><circle cx="307" cy="134" r="14" stroke="#3a6ae8"/><circle cx="365" cy="133" r="14" stroke="#3a6ae8"/>
   </g>
   <g fill="none" stroke-width="5" stroke="#2ab8e8" stroke-dasharray="30 100">
    <circle cx="248" cy="92" r="14" transform="rotate(-90 248 92)"/><circle cx="307" cy="92" r="14" transform="rotate(-90 307 92)"/><circle cx="365" cy="91" r="14" transform="rotate(-90 365 91)"/>
    <circle cx="248" cy="134" r="14" transform="rotate(-90 248 134)"/><circle cx="307" cy="134" r="14" transform="rotate(-90 307 134)"/><circle cx="365" cy="133" r="14" transform="rotate(-90 365 133)"/>
   </g>
   <g fill="#4a5060"><circle cx="248" cy="92" r="10"/><circle cx="307" cy="92" r="10"/><circle cx="365" cy="91" r="10"/><circle cx="248" cy="134" r="10"/><circle cx="307" cy="134" r="10"/><circle cx="365" cy="133" r="10"/></g>
   <g font-size="3.8" fill="#2ac0d0" text-anchor="middle"><text x="248" y="111">98.9%</text><text x="307" y="111">97.9%</text><text x="365" y="110">96.9%</text><text x="248" y="156">95.9%</text><text x="307" y="156">94.9%</text><text x="365" y="155">93.9%</text></g>
   <!-- line chart -->
   <g font-size="3.8" fill="#ccd"><text x="260" y="178">● 工单量  ● 办结量  ● 按时办结量  ● 满意量</text></g>
   <g stroke="#555" stroke-width="0.5"><path d="M232 189H378M232 207H378M232 225H378M232 243H378M232 261H378M232 279H378"/></g>
   <path d="M232 243 L245 230 L256 211 L270 203 L285 233 L299 224 L313 249 L324 219 L336 244 L350 240 L365 244 L378 247" fill="none" stroke="#b040c8" stroke-width="1"/>
   <path d="M232 240 L245 224 L256 238 L270 196 L285 210 L299 233 L313 225 L324 236 L338 220 L355 210 L370 225" fill="none" stroke="#c040c0" stroke-width="1" opacity=".8"/>
   <path d="M232 258 L245 253 L256 249 L270 241 L285 250 L299 268 L313 256 L324 269 L336 271 L350 269 L365 266 L378 262" fill="none" stroke="#4a60e8" stroke-width="1"/>
   <path d="M232 270 L256 270 L285 270 L313 266 L324 271 L350 272 L378 268" fill="none" stroke="#6a50f0" stroke-width="1"/>
   <path d="M232 226 H380 M232 252 H380" stroke="#c040c0" stroke-dasharray="2 2" stroke-width="0.7"/>
   <g fill="#e040e0"><circle cx="270" cy="195" r="4"/><circle cx="324" cy="217" r="4"/><circle cx="301" cy="263" r="3.5"/><circle cx="322" cy="236" r="4"/></g>
   <g fill="#3a6ae8"><circle cx="270" cy="234" r="4"/><circle cx="313" cy="248" r="3.5"/><circle cx="350" cy="266" r="3.5"/><circle cx="365" cy="262" r="3.5"/></g>
   <!-- ranking table -->
   <rect x="411" y="39" width="181" height="9" fill="#1a2130"/>
   <g font-size="3.8" fill="#aab"><text x="420" y="46">承办单位名</text><text x="468" y="46">考核量</text><text x="512" y="46">考评结果</text><text x="576" y="46">名次</text></g>
   <g font-size="3.8" font-weight="bold"><text x="418" y="57" fill="#2ad0d0">雁塔区政府</text><text x="468" y="57" fill="#2ad0d0">24685</text><text x="517" y="57" fill="#2ad0d0">98.8</text>
   <text x="418" y="67" fill="#b040e0">市环保局</text><text x="468" y="67" fill="#b040e0">24685</text><text x="517" y="67" fill="#b040e0">98.7</text>
   <text x="418" y="77" fill="#3a50f0">住房公积金管理中心</text><text x="468" y="77" fill="#3a50f0">24685</text><text x="517" y="77" fill="#3a50f0">98.6</text></g>
   <circle cx="579" cy="55" r="3" fill="#2ae0e0"/><circle cx="579" cy="65" r="3" fill="#b040e0"/><circle cx="579" cy="75" r="3" fill="#3a50f0"/>
   <g font-size="3.8" fill="#8890a0"><text x="418" y="88">市环保局</text><text x="468" y="88">24685</text><text x="517" y="88">98.5</text><text x="578" y="88">4</text><text x="418" y="99">市环保局</text><text x="468" y="99">24685</text><text x="517" y="99">98.4</text><text x="578" y="99">5</text><text x="418" y="110">市环保局</text><text x="468" y="110">24685</text><text x="517" y="110">98.3</text><text x="578" y="110">6</text><text x="418" y="120">市环保局</text><text x="468" y="120">24685</text><text x="517" y="120">98.2</text><text x="578" y="120">7</text><text x="418" y="129">市环保局</text><text x="468" y="129">24685</text><text x="517" y="129">98.1</text><text x="578" y="129">8</text><text x="418" y="139">市环保局</text><text x="468" y="139">24685</text><text x="517" y="139">98.0</text><text x="578" y="139">9</text><text x="418" y="149">市环保局</text><text x="468" y="149">24685</text><text x="517" y="149">97.8</text><text x="577" y="149">10</text></g>
   <g stroke="#1a2030" stroke-width="0.6"><path d="M412 59H592M412 69H592M412 80H592M412 91H592M412 102H592M412 112H592M412 122H592M412 132H592M412 142H592"/></g>
   <!-- purple bars -->
   <g fill="#a040e8"><rect x="428" y="181" width="8" height="36"/><rect x="470" y="187" width="8" height="30"/><rect x="512" y="189" width="7" height="28"/><rect x="555" y="189" width="7" height="28"/><rect x="428" y="237" width="8" height="33"/><rect x="470" y="240" width="8" height="30"/><rect x="512" y="234" width="7" height="36"/><rect x="555" y="236" width="7" height="34"/></g>
   <g fill="#5a40f0"><rect x="443" y="213" width="7" height="4"/><rect x="485" y="209" width="7" height="8"/><rect x="527" y="203" width="7" height="14"/><rect x="570" y="205" width="7" height="12"/><rect x="443" y="255" width="7" height="15"/><rect x="485" y="251" width="7" height="19"/><rect x="527" y="250" width="7" height="20"/><rect x="570" y="237" width="7" height="33"/></g>
   <g font-size="3.6" fill="#2ac0e0" text-anchor="middle"><text x="438" y="228">市公安局</text><text x="480" y="228">雁塔区政府</text><text x="522" y="228">市环保局</text><text x="565" y="228">市交通局</text><text x="438" y="281">住房公积金中心</text><text x="480" y="281">市人社局</text><text x="522" y="281">莲湖区政府</text><text x="565" y="281">住房保障局</text></g>
  </svg>
 </div>
</div>
<div class="cap" style="left:1575px;width:733px;top:427px">效能管理平台</div>

<!-- ============ PANEL 3 CARD 2 (table) ============ -->
<div class="cardw" style="left:1610px;top:473px;width:668px;height:354px">
 <div class="card" style="clip-path:polygon(0 0,610px 0,668px 60px,668px 100%,60px 100%,0 290px)">
  <svg class="abs" style="left:0;top:0" width="668" height="354" viewBox="0 0 668 354">
   <rect x="48" y="36" width="570" height="74" fill="#eef3fc"/>
   <g fill="none" stroke="#8a9aae" stroke-width="1">
    <rect x="48" y="36" width="570" height="74"/>
    <path d="M162 36V110M198 36V110M226 55V110M263 36V110M324 75V110M386 75V110M441 55V110M498 55V110M555 55V110M592 36V110"/>
    <path d="M198 55H592M263 75H441"/>
   </g>
   <g font-size="8.5" fill="#444" text-anchor="middle">
    <text x="105" y="76">工单编号</text>
    <text x="180" y="69">办理部</text><text x="180" y="80">门</text>
    <text x="230" y="49">效果指标</text><text x="427" y="49">过程指标</text>
    <text x="212" y="68">满意</text><text x="212" y="79">度</text><text x="212" y="90">得分</text>
    <text x="245" y="67">效果指</text><text x="245" y="78">标</text><text x="245" y="89">考核得</text><text x="245" y="100">分</text>
    <text x="352" y="68">超期办理</text>
    <text x="293" y="89">超期时间(天</text><text x="293" y="101">数)</text>
    <text x="355" y="89">限办时间(天</text><text x="355" y="101">数)</text>
    <text x="414" y="89">办理时限得</text><text x="414" y="101">分</text>
    <text x="470" y="82">转办回退得</text><text x="470" y="93">分</text>
    <text x="527" y="82">回访重办得</text><text x="527" y="93">分</text>
    <text x="573" y="82">及时接</text><text x="573" y="93">收</text>
    <text x="605" y="78">分数</text>
   </g>
   <rect x="48" y="116" width="570" height="14" fill="#f7f7f9"/>
   <g font-size="8.5" fill="#555"><text x="48" y="127">20200117145236842x001</text><text x="160" y="127">习水县</text><text x="205" y="127">80</text><text x="227" y="127">54.00</text><text x="292" y="127">0</text><text x="353" y="127">5</text><text x="405" y="127">7.00</text><text x="468" y="127">9</text><text x="525" y="127">9</text><text x="572" y="127">5</text><text x="596" y="127">84.00</text>
   <text x="525" y="148">9</text><text x="572" y="148">5</text><text x="596" y="148">84.00</text><text x="525" y="169">9</text><text x="572" y="169">5</text><text x="596" y="169">80.18</text><text x="525" y="190">9</text><text x="572" y="190">5</text><text x="596" y="190">84.00</text></g>
   <rect x="50" y="130" width="455" height="11" fill="#5aa0e0"/>
   <text x="56" y="138" font-size="6.5" fill="#fff">效能指数统计报表</text>
   <g font-size="3.8" fill="#666"><text x="60" y="154">开始时间</text><text x="330" y="154">结束时间</text></g>
   <rect x="108" y="149" width="72" height="7" fill="none" stroke="#ccc" stroke-width="0.6"/><rect x="335" y="149" width="72" height="7" fill="none" stroke="#ccc" stroke-width="0.6"/>
   <g font-size="3.5" fill="#666"><text x="112" y="154">2017-03-17 11:43:48</text><text x="339" y="154">2017-04-17 11:43:48</text></g>
   <rect x="60" y="162" width="445" height="8" fill="#eef2fa"/>
   <g font-size="4" fill="#333" text-anchor="middle"><text x="137" y="168">职能部门</text><text x="235" y="168">交办总数</text><text x="300" y="168">及时响应率</text><text x="395" y="168">三方通话接通率</text></g>
   <g font-size="3.8" fill="#444" text-anchor="middle">
    <text x="137" y="178">公安新城分局</text><text x="235" y="178">19</text><text x="300" y="178">73.68%</text><text x="355" y="178">5</text><text x="400" y="178">100.00%</text>
    <text x="137" y="186">区人社局</text><text x="235" y="186">15</text><text x="300" y="186">93.33%</text><text x="355" y="186">5</text><text x="400" y="186">100.00%</text>
    <text x="137" y="194">胡家庙街道</text><text x="235" y="194">14</text><text x="300" y="194">57.14%</text><text x="355" y="194">0</text><text x="400" y="194">0.00%</text>
    <text x="137" y="202">长乐中路街道</text><text x="235" y="202">13</text><text x="300" y="202">69.23%</text><text x="355" y="202">0</text><text x="400" y="202">0.00%</text>
    <text x="137" y="210">太华路街道</text><text x="235" y="210">12</text><text x="300" y="210">83.33%</text><text x="355" y="210">0</text><text x="400" y="210">0.00%</text>
    <text x="137" y="218">区建住局</text><text x="235" y="218">10</text><text x="300" y="218">90.00%</text><text x="355" y="218">1</text><text x="400" y="218">100.00%</text>
    <text x="137" y="226">韩森寨街道</text><text x="235" y="226">10</text><text x="300" y="226">80.00%</text><text x="355" y="226">0</text><text x="400" y="226">0.00%</text>
    <text x="137" y="234">规划新城分局</text><text x="235" y="234">9</text><text x="300" y="234">88.89%</text><text x="355" y="234">1</text><text x="400" y="234">100.00%</text>
    <text x="137" y="242">工商新城分局</text><text x="235" y="242">7</text><text x="300" y="242">85.71%</text><text x="355" y="242">0</text><text x="400" y="242">0.00%</text>
    <text x="137" y="250">长乐西路街道</text><text x="235" y="250">7</text>
    <text x="137" y="258">区城市管理局</text><text x="235" y="258">7</text><text x="300" y="258">100.00%</text><text x="400" y="258">0.00%</text>
    <text x="137" y="266">西一路街道</text>
   </g>
   <text x="254" y="256" font-size="13" fill="#e02020" font-weight="bold" font-family="Noto Sans CJK SC,sans-serif">效能指数统计报表让各职能部门</text>
   <text x="236" y="277" font-size="13" fill="#e02020" font-weight="bold" font-family="Noto Sans CJK SC,sans-serif" clip-path="inset(0 0 6px 0)">的工作更加科学化、精细化、标</text>
  </svg>
 </div>
</div>
<div class="cap" style="left:1575px;width:733px;top:843px">效能指标报告</div>

</body></html>
